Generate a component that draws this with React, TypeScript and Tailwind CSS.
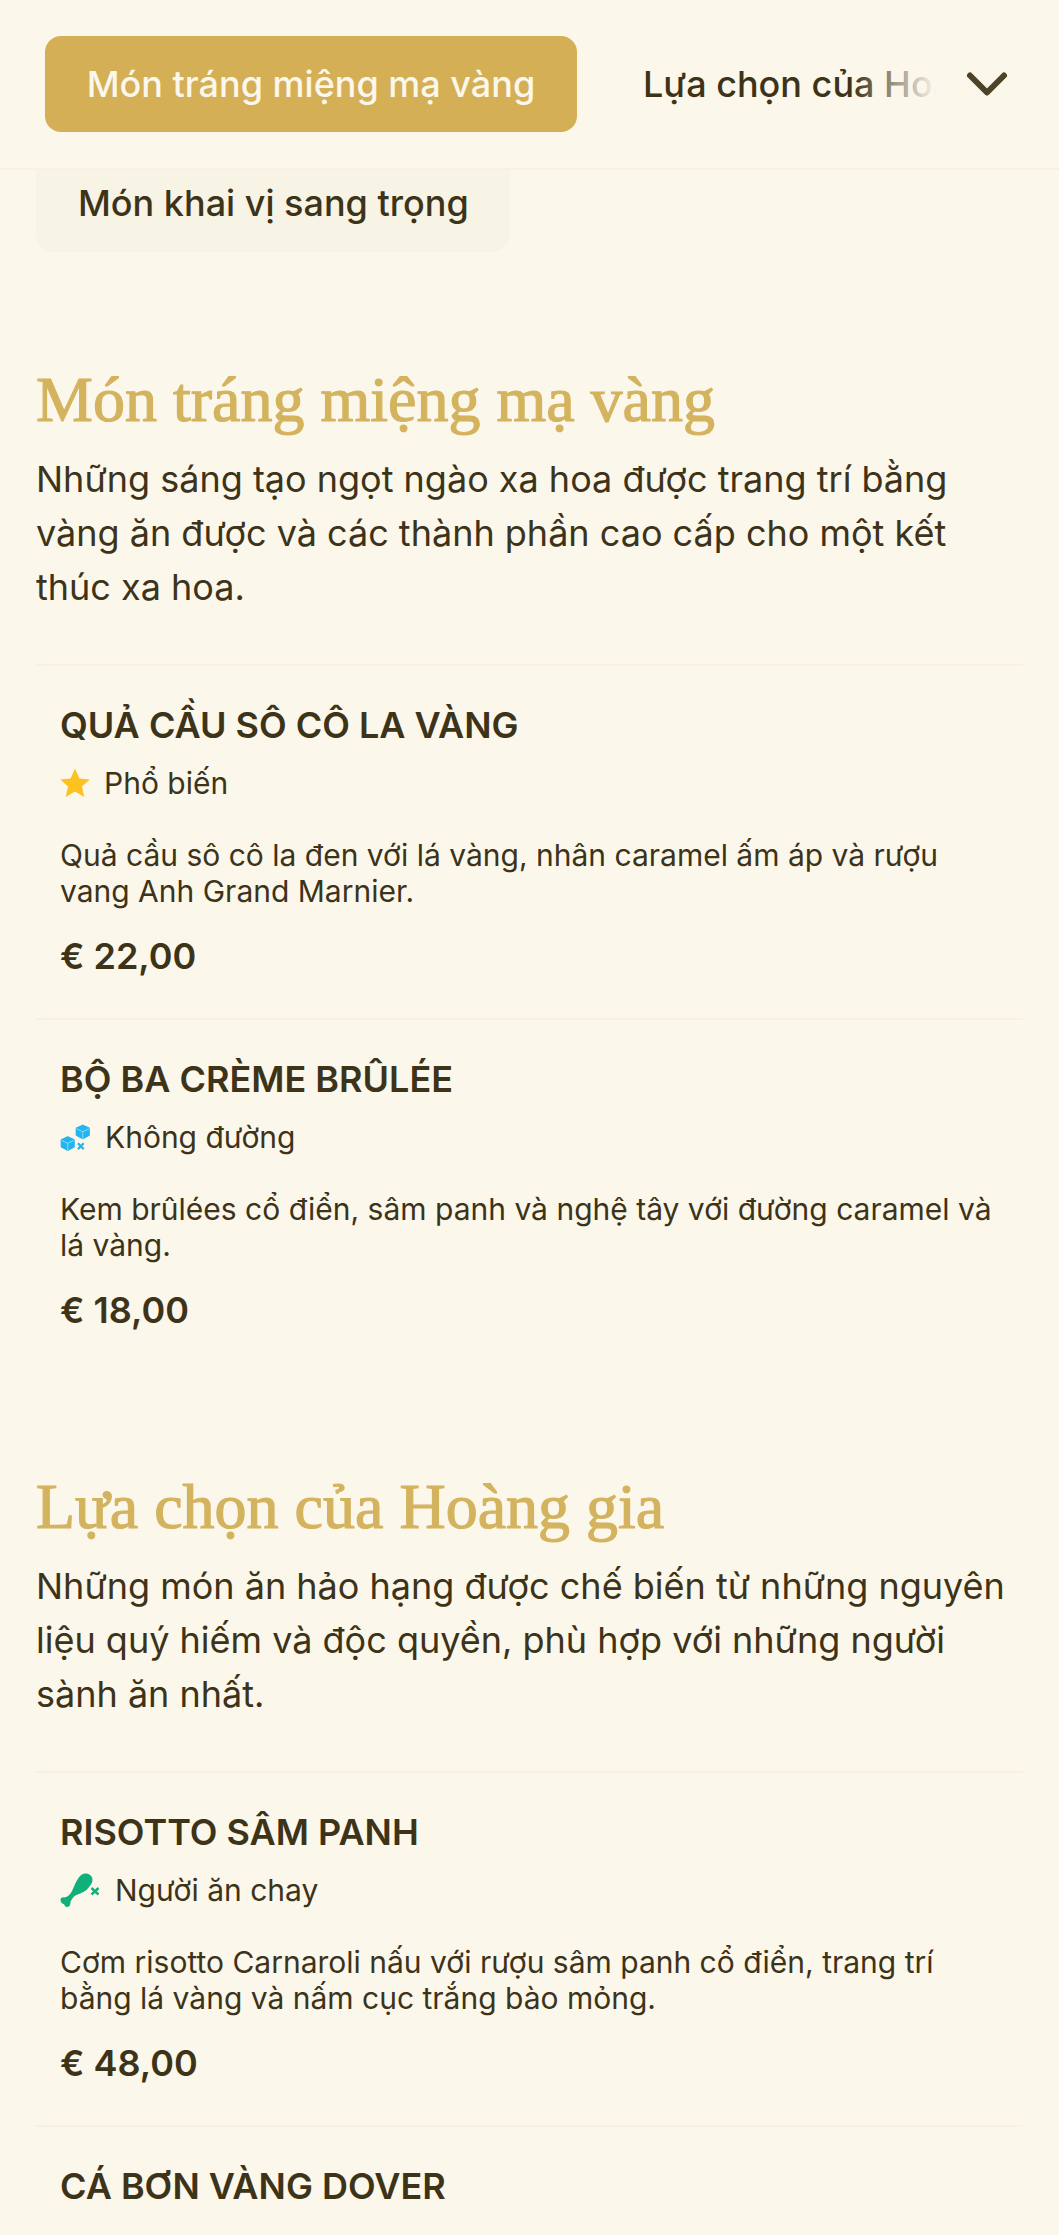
import React from 'react';
import { ChevronDown } from 'lucide-react';

const StarIcon = () => (
  <svg viewBox="0 0 30 30" className="w-[30px] h-[30px] shrink-0">
    <path d="M15 .5l4.4 10 10.4.9-7.9 7 2.4 10.6L15 23.5 5.7 29l2.4-10.6-7.9-7 10.4-.9z" fill="#FCC220" />
  </svg>
);

const SugarFreeIcon = () => (
  <svg viewBox="0 0 32 27" className="w-[31px] h-[27px] shrink-0">
    <path d="M23.5 1l6.5 3v7l-6.5 3.5-6.5-3.5V4z" fill="#22B5F0" stroke="#22B5F0" strokeWidth="1.6" strokeLinejoin="round" />
    <path d="M17 4.5l6.5 3 6.5-3M23.5 7.5V15" stroke="#A5E2FA" strokeWidth=".8" fill="none" />
    <path d="M8 13l6.5 3v7L8 26.5 1.500 23v-7z" fill="#22B5F0" stroke="#22B5F0" strokeWidth="1.6" strokeLinejoin="round" />
    <path d="M1.500 16.500l6.500 3 6.500-3M8 19.500V26.500" stroke="#A5E2FA" strokeWidth=".8" fill="none" />
    <path d="M18.500 19.500l6 6M24.500 19.500l-6 6" stroke="#22B5F0" strokeWidth="2.200" />
  </svg>
);

const VegIcon = () => (
  <svg viewBox="0 0 40 34" className="w-[41px] h-[34px] shrink-0">
    <path
      d="M25 .5C29 .5 32 3 32 7 32 10 29 14 26 17 22 20 17 21 14 23 12 25 11 27 10 28.500 10 31 9.500 34 6.500 34 4.500 34 4 32 3.500 31 1.500 31 0 29 0 27 0 25 2 24 4 24.500 6 24.500 9 22 11 19 13 15 15 9 18 5 20 2 22 .5 25 .5Z"
      fill="#10B07A"
    />
    <path d="M31 15l7 6.500M38 15l-7 6.500" stroke="#10B07A" strokeWidth="2.400" />
  </svg>
);

type Item = {
  name: string;
  badge?: string;
  icon?: 'star' | 'sugar' | 'veg';
  desc?: string;
  price?: string;
};

type Section = { title: string; intro: string; items: Item[] };

const sections: Section[] = [
  {
    title: 'Món tráng miệng mạ vàng',
    intro:
      'Những sáng tạo ngọt ngào xa hoa được trang trí bằng vàng ăn được và các thành phần cao cấp cho một kết thúc xa hoa.',
    items: [
      {
        name: 'Quả cầu sô cô la vàng',
        badge: 'Phổ biến',
        icon: 'star',
        desc: 'Quả cầu sô cô la đen với lá vàng, nhân caramel ấm áp và rượu vang Anh Grand Marnier.',
        price: '€ 22,00',
      },
      {
        name: 'Bộ ba crème brûlée',
        badge: 'Không đường',
        icon: 'sugar',
        desc: 'Kem brûlées cổ điển, sâm panh và nghệ tây với đường caramel và lá vàng.',
        price: '€ 18,00',
      },
    ],
  },
  {
    title: 'Lựa chọn của Hoàng gia',
    intro:
      'Những món ăn hảo hạng được chế biến từ những nguyên liệu quý hiếm và độc quyền, phù hợp với những người sành ăn nhất.',
    items: [
      {
        name: 'Risotto sâm panh',
        badge: 'Người ăn chay',
        icon: 'veg',
        desc: 'Cơm risotto Carnaroli nấu với rượu sâm panh cổ điển, trang trí bằng lá vàng và nấm cục trắng bào mỏng.',
        price: '€ 48,00',
      },
      // the rest of this card is below the fold
      { name: 'Cá bơn vàng Dover' },
    ],
  },
];

const BadgeIcon = ({ icon }: { icon: Item['icon'] }) => {
  if (icon === 'star') return <StarIcon />;
  if (icon === 'sugar') return <SugarFreeIcon />;
  return <VegIcon />;
};

const MenuItem = ({ item }: { item: Item }) => (
  <div className="border-t-[2px] border-[#F6F1E2] px-[24px] pt-[39px] h-[354px]">
    <h3 className="text-[36px] leading-[40px] font-semibold uppercase text-[#3D3319]">{item.name}</h3>
    {item.badge && (
      <>
        <div className="mt-[18px] flex items-center gap-[14px] h-[40px] text-[30px] text-[#3D3319]">
          <BadgeIcon icon={item.icon} />
          <span>{item.badge}</span>
        </div>
        <p className="mt-[34px] text-[30px] leading-[36px] text-[#3D3319]">{item.desc}</p>
        <p className="mt-[25px] text-[36px] leading-[44px] font-semibold text-[#3D3319]">{item.price}</p>
      </>
    )}
  </div>
);

export default function App() {
  return (
    <div className="h-[2235px] overflow-hidden bg-[#FBF7EB] font-['Inter',sans-serif]">
      <header className="h-[170px] flex items-center border-b-[2px] border-[#F6F1E2] pl-[45px]">
        <button className="w-[532px] h-[96px] shrink-0 rounded-[16px] bg-[#D4AF55] text-[36px] font-medium text-[#FBF7EB]">
          Món tráng miệng mạ vàng
        </button>
        <div className="relative ml-[66px] w-[294px] overflow-hidden whitespace-nowrap text-[36px] font-medium text-[#3D3319]">
          Lựa chọn của Hoàng gia
          <div className="absolute inset-y-0 right-0 w-[85px] bg-gradient-to-r from-transparent to-[#FBF7EB]" />
        </div>
        <ChevronDown className="ml-[16px] w-[68px] h-[68px] text-[#4D4326]" strokeWidth={2.1} />
      </header>
      <div className="ml-[36px] mb-[13px] w-[474px] h-[82px] rounded-b-[18px] bg-[#F7F3E5] flex items-center pl-[42px] pb-[17px] text-[36px] font-medium text-[#3D3319]">
        Món khai vị sang trọng
      </div>
      <main className="px-[36px]">
        {sections.map((s) => (
          <section key={s.title} className="pt-[100px]">
            <h2 className="font-['Liberation_Serif',serif] text-[64px] leading-[70px] text-[#D4B35F] [-webkit-text-stroke:1.2px_#D4B35F]">
              {s.title}
            </h2>
            <p className="mt-[17px] text-[36px] leading-[54px] text-[#3D3319]">{s.intro}</p>
            <div className="mt-[50px]">
              {s.items.map((it) => (
                <MenuItem key={it.name} item={it} />
              ))}
            </div>
          </section>
        ))}
      </main>
    </div>
  );
}
